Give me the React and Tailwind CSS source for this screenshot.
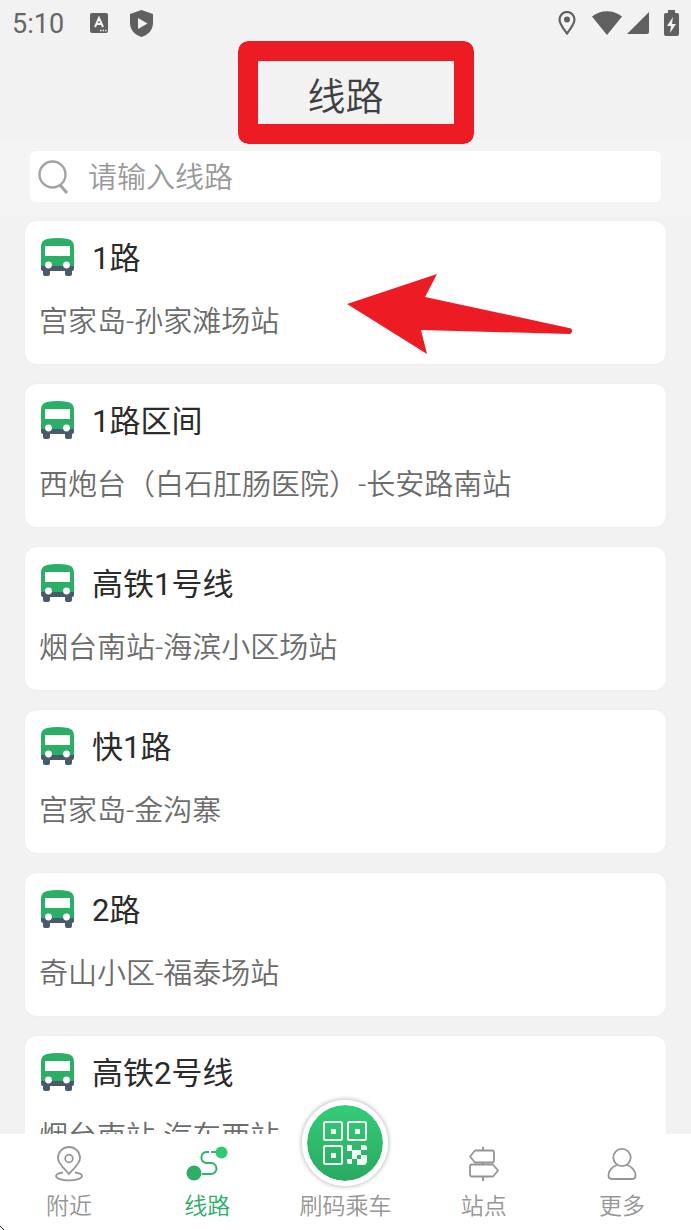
const routes = [
    { name: '1路', stops: '宫家岛-孙家滩场站', highlighted: true },
    { name: '1路区间', stops: '西炮台（白石肛肠医院）-长安路南站' },
    { name: '高铁1号线', stops: '烟台南站-海滨小区场站' },
    { name: '快1路', stops: '宫家岛-金沟寨' },
    { name: '2路', stops: '奇山小区-福泰场站' },
    { name: '高铁2号线', stops: '烟台南站-汽车西站' },
];

const tabs = [
    { label: '附近', icon: NearbyIcon },
    { label: '线路', icon: RouteIcon, active: true },
    { label: '刷码乘车', icon: QrIcon, raised: true },
    { label: '站点', icon: SignpostIcon },
    { label: '更多', icon: UserIcon },
];

function BusIcon() {
    return (
        <svg className="mt-px h-[38px] w-[33px] shrink-0" viewBox="0 0 33 38" aria-hidden="true">
            <path d="M2 28h29v8q0 2-2 2h-3q-2 0-2-2v-3H9v3q0 2-2 2H4q-2 0-2-2z" fill="#485a6b" />
            <path d="M0 9Q0 2 6 1Q16.500-1 27 1Q33 2 33 9v19H0z" fill="#2bae66" />
            <path d="M0 28h33v3q0 2-2 2H2q-2 0-2-2z" fill="#485a6b" />
            <rect x="4" y="8" width="25" height="10" fill="#fff" />
            <circle cx="7.5" cy="27" r="3.4" fill="#fff" />
            <circle cx="25.5" cy="27" r="3.4" fill="#fff" />
        </svg>
    );
}

function SearchIcon() {
    return (
        <svg className="h-[34px] w-8 shrink-0" viewBox="0 0 32 34" fill="none" stroke="#a3a3a3" aria-hidden="true">
            <circle cx="14.5" cy="14.5" r="13" strokeWidth="2.4" />
            <path d="M22 25l7 8" strokeWidth="3" />
        </svg>
    );
}

function NearbyIcon() {
    return (
        <svg className="h-9 w-7" viewBox="0 0 28 36" fill="none" stroke="currentColor" strokeWidth="1.8" aria-hidden="true">
            <path d="M14 28C10 23 3 18 3 12a11 11 0 0 1 22 0c0 6-7 11-11 16z" />
            <circle cx="14" cy="12.5" r="3.8" />
            <path d="M8 26.500c-4 .6-7 1.800-7 3.500 0 2.500 6 4.300 13 4.300s13-1.800 13-4.300c0-1.700-3-2.900-7-3.500" />
        </svg>
    );
}

function RouteIcon() {
    return (
        <svg className="h-9 w-[42px]" viewBox="0 0 42 36" fill="none" aria-hidden="true">
            <path d="M16 28h9a5.500 5.500 0 0 0 0-11h-5a5.600 5.600 0 0 1 0-11h3M25 6h6" stroke="#2fb469" strokeWidth="2" />
            <circle cx="8" cy="27" r="7.5" fill="#2bb065" />
            <circle cx="35.5" cy="6.5" r="6" fill="#31c970" />
        </svg>
    );
}

function QrIcon() {
    return (
        <svg className="h-11 w-11" viewBox="0 0 44 44" fill="none" stroke="#f1fff7" strokeWidth="2" aria-hidden="true">
            <rect x="1" y="1" width="18" height="18" rx="1.5" />
            <rect x="25" y="1" width="18" height="18" rx="1.5" />
            <rect x="1" y="25" width="18" height="18" rx="1.5" />
            <path
                d="M8 8h5v5H8zM32 8h5v5h-5zM8 32h5v5H8zM24 24h5v5h5v5h-5v-4h-5zM29 34h5v4h-5zM34 29h4v5h-4zM38 24h3q3 0 3 3v2h-6zM24 38h5v5h-3q-2 0-2-2zM38 34h6v6q0 4-4 4h-6v-6h4z"
                fill="#f1fff7"
                stroke="none"
            />
        </svg>
    );
}

function SignpostIcon() {
    return (
        <svg className="h-9 w-[30px]" viewBox="0 0 30 36" fill="none" stroke="currentColor" strokeWidth="1.8" aria-hidden="true">
            <path d="M14 1v4M14 16v3M14 30v5" strokeWidth="2" />
            <path d="M6 4.500h17q2 0 2 2v8q0 2-2 2H6L1 10.500z" strokeLinejoin="round" />
            <path d="M3 18.500h21l5 6-5 6H3q-2 0-2-2v-8q0-2 2-2z" strokeLinejoin="round" />
        </svg>
    );
}

function UserIcon() {
    return (
        <svg className="h-9 w-[30px]" viewBox="0 0 30 36" fill="none" stroke="currentColor" strokeWidth="1.8" aria-hidden="true">
            <circle cx="15" cy="11.5" r="8.7" />
            <path d="M10 19C5 20.500 1.500 25 1.500 29.500q0 3.500 3 3.500h21q3 0 3-3.500c0-4.500-3.500-9-8.500-10.500" />
        </svg>
    );
}

function StatusBar() {
    return (
        <div className="flex h-[46px] shrink-0 items-center justify-between px-3 text-[#666]">
            <div className="flex items-center">
                <span className="w-[78px] pt-0.5 text-[27px] leading-8 font-normal">5:10</span>
                <svg className="h-5 w-[18px]" viewBox="0 0 18 20" aria-hidden="true">
                    <rect width="18" height="20" rx="2" fill="#606060" />
                    <path d="M5 14l4-9 4 9M6.500 11h5" fill="none" stroke="#f2f2f2" strokeWidth="2" />
                    <path d="M10 17.500h7" stroke="#f2f2f2" strokeWidth="1.5" strokeDasharray="1.5 1" />
                </svg>
                <svg className="ml-[22px] h-[27px] w-[23px]" viewBox="0 0 23 27" aria-hidden="true">
                    <path d="M11.500 0L23 4v9c0 7-5 12-11.500 14C5 25 0 20 0 13V4z" fill="#606060" />
                    <path d="M8 8l9.500 5.500L8 19z" fill="#f2f2f2" />
                </svg>
            </div>
            <div className="flex items-center">
                <svg className="h-6 w-[18px]" viewBox="0 0 18 24" aria-hidden="true">
                    <path d="M9 22.500C6 18.500 1.500 13 1.500 8.500a7.500 7.500 0 0 1 15 0C16.500 13 12 18.500 9 22.500z" fill="none" stroke="#606060" strokeWidth="2.2" />
                    <circle cx="9" cy="8.5" r="3" fill="#606060" />
                </svg>
                <svg className="ml-4 h-6 w-[30px]" viewBox="0 0 30 24" aria-hidden="true">
                    <path d="M0 5.500C9-1.500 21-1.500 30 5.500L15 24z" fill="#606060" />
                </svg>
                <svg className="ml-[5px] h-[22px] w-[22px]" viewBox="0 0 22 22" aria-hidden="true">
                    <path d="M22 0v20q0 2-2 2H0z" fill="#606060" />
                </svg>
                <svg className="ml-[15px] h-[26px] w-[15px]" viewBox="0 0 15 26" aria-hidden="true">
                    <path d="M4 0h7v3h2q2 0 2 2v19q0 2-2 2H2q-2 0-2-2V5q0-2 2-2h2z" fill="#606060" />
                    <path d="M9 7l-6 9h4l-1 7 6-9H8z" fill="#f2f2f2" />
                </svg>
            </div>
        </div>
    );
}

function RouteCard({ route }) {
    return (
        <li className="relative h-[143px] shrink-0 rounded-xl bg-white px-[14px] pt-4 shadow-[0_0_3px_rgba(0,0,0,0.04)]">
            <a href="#route" className="block">
                <div className="flex items-start gap-[18px] pl-0.5">
                    <BusIcon />
                    <h2 className="text-[31px] leading-[44px] font-normal text-[#2b2b2b]">{route.name}</h2>
                </div>
                <p className="mt-5 text-[29px] leading-[42px] text-[#6c6c6c]">{route.stops}</p>
            </a>
            {route.highlighted && (
                <svg
                    className="pointer-events-none absolute top-[52px] left-[322px] h-[82px] w-[226px]"
                    viewBox="0 0 226 82"
                    fill="#ed1c24"
                    aria-hidden="true"
                >
                    <path d="M0 31L90 1 78 24l144 31a3 3 0 0 1 0 6L74 57l6 24z" />
                </svg>
            )}
        </li>
    );
}

function TabBar() {
    return (
        <nav className="relative grid h-24 shrink-0 grid-cols-5 bg-white">
            {tabs.map(({ label, icon: Icon, active, raised }) => (
                <button
                    key={label}
                    type="button"
                    className={`relative flex flex-col items-center justify-end pb-[5px] ${active ? 'text-[#2bae66]' : 'text-[#969696]'}`}
                >
                    {raised ? (
                        <span className="absolute -top-[34px] flex h-[86px] w-[86px] items-center justify-center rounded-full border-[5px] border-white bg-linear-to-b from-[#33cd78] to-[#2aa960] bg-clip-padding shadow-[0_0_4px_1px_rgba(0,0,0,0.25)]">
                            <Icon />
                        </span>
                    ) : (
                        <Icon />
                    )}
                    <span className="mt-[7px] text-[23px] leading-9">{label}</span>
                </button>
            ))}
            <svg className="absolute bottom-0 left-0 h-1 w-1" viewBox="0 0 4 4" aria-hidden="true">
                <path d="M0 0h1v1h1v1h1v1h1v1H3V3H2V2H1V1H0z" fill="#222" />
            </svg>
        </nav>
    );
}

export default function App() {
    return (
        <div className="flex h-screen flex-col overflow-hidden bg-[#f2f2f2] font-[Roboto,'Noto_Sans_CJK_SC',sans-serif] font-[350]">
            <StatusBar />

            <header className="relative flex h-[94px] shrink-0 justify-center pt-[23px]">
                <h1 className="text-[38px] leading-[56px] text-[#404040]">线路</h1>
                <div className="pointer-events-none absolute -top-[5px] left-1/2 ml-[-108px] h-[103px] w-[236px] rounded-[10px] bg-[#ed1c24] p-5 [mask:linear-gradient(#000_0_0)_content-box_exclude,linear-gradient(#000_0_0)]" />
            </header>

            <div className="shrink-0 bg-[#f4f4f4] px-[30px] pt-[11px] pb-[14px]">
                <label className="flex h-[51px] items-center gap-[18px] rounded-md bg-white pl-2">
                    <SearchIcon />
                    <input
                        type="text"
                        aria-label="请输入线路"
                        placeholder="请输入线路"
                        className="h-full min-w-0 flex-1 pt-0.5 text-[29px] text-[#404040] outline-none placeholder:text-[#999]"
                    />
                </label>
            </div>

            <main className="min-h-0 flex-1 overflow-y-auto px-[25px] pt-[5px] [scrollbar-width:none]">
                <ul className="flex flex-col gap-5">
                    {routes.map((route) => (
                        <RouteCard key={route.name} route={route} />
                    ))}
                </ul>
            </main>

            <TabBar />
        </div>
    );
}
